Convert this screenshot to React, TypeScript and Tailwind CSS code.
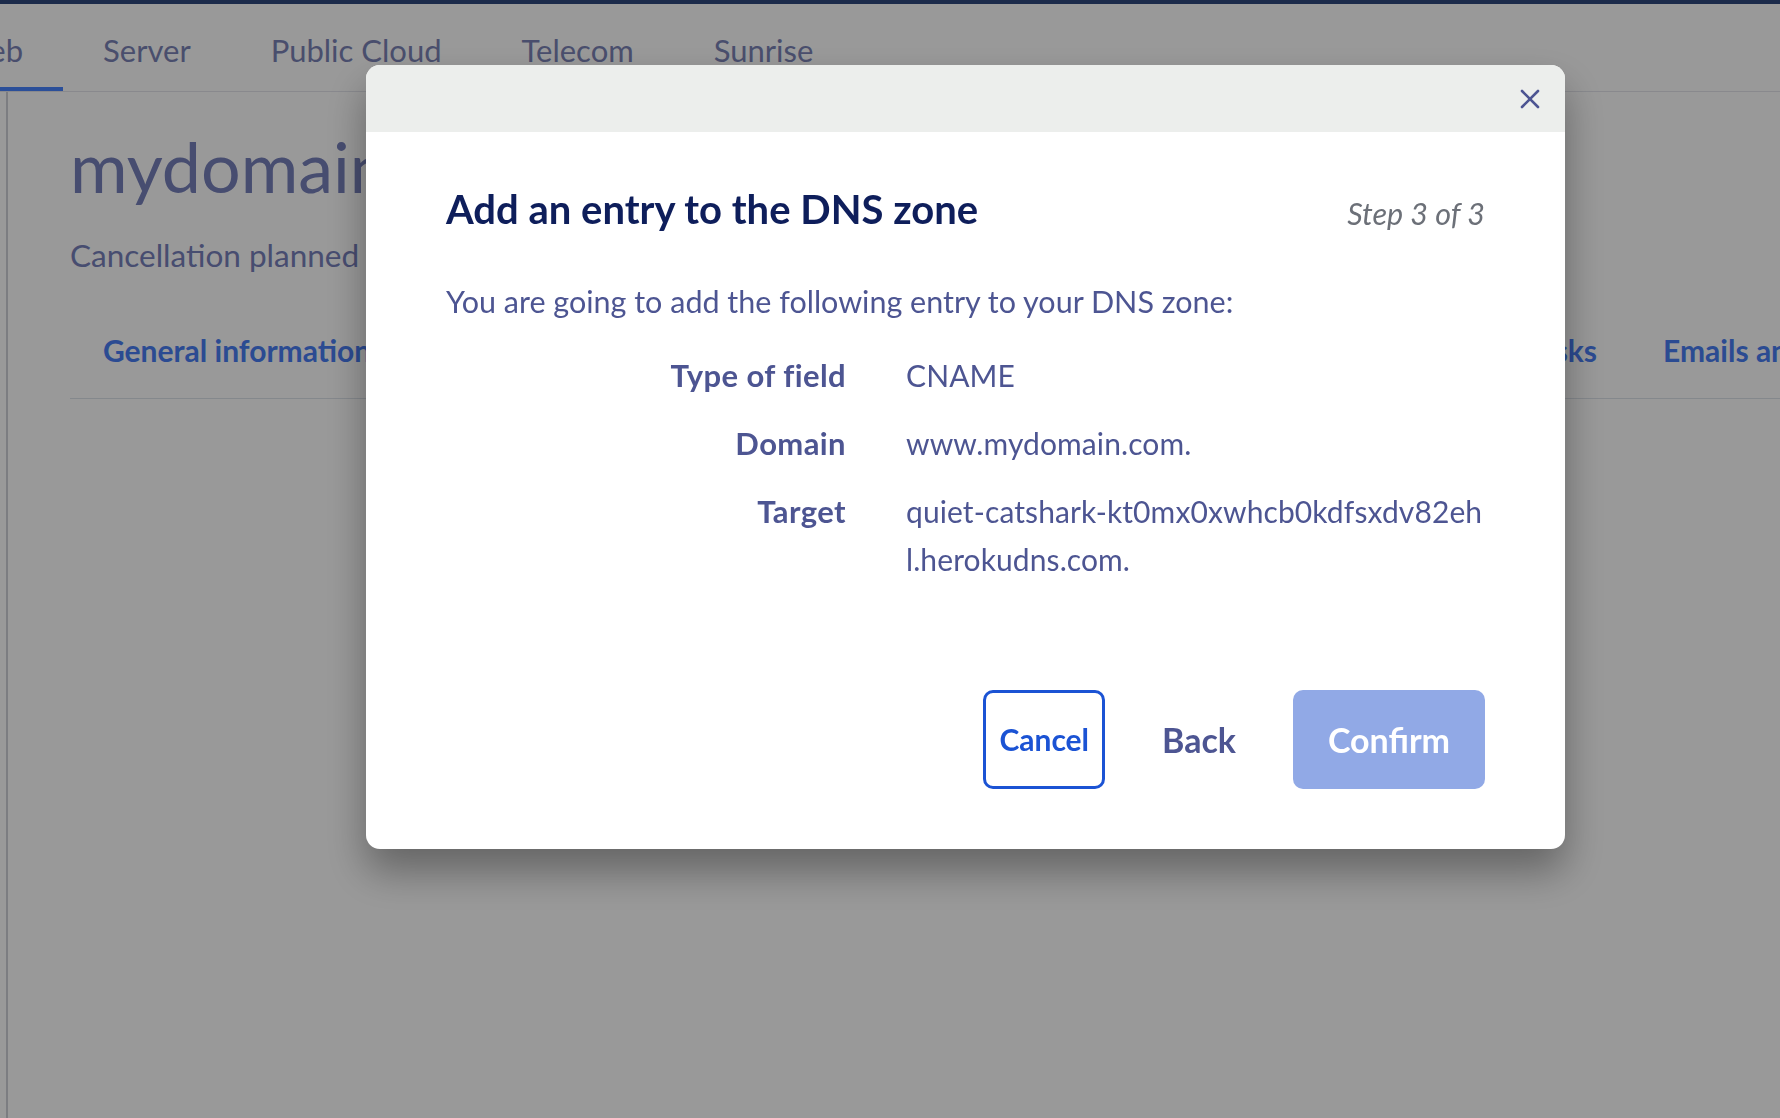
import React from 'react';

const topTabs = ['Web', 'Server', 'Public Cloud', 'Telecom', 'Sunrise'];
const subTabs = ['General information', 'DNS zone', 'DNS servers', 'Redirection', 'Dynhost', 'GLUE', 'SSL', 'Tasks', 'Emails and more'];

function CloseIcon() {
  return (
    <svg width="20" height="20" viewBox="0 0 20 20" fill="none" stroke="#4d5592" strokeWidth="2.6" strokeLinecap="round">
      <line x1="2" y1="2" x2="18" y2="18" />
      <line x1="18" y1="2" x2="2" y2="18" />
    </svg>
  );
}

export default function App() {
  const rows = [
    { label: 'Type of field', value: 'CNAME' },
    { label: 'Domain', value: 'www.mydomain.com.' },
    { label: 'Target', value: 'quiet-catshark-kt0mx0xwhcb0kdfsxdv82ehl.herokudns.com.' },
  ];

  return (
    <div className="relative h-[1118px] w-full overflow-hidden bg-white font-['Lato',sans-serif]">
      {/* Top bar */}
      <div className="h-[4px] bg-[#2f487d]" />
      <nav className="h-[88px] border-b border-[#e4e5ec] overflow-hidden">
        <div className="flex h-full ml-[-81px]">
          {topTabs.map((t, i) => (
            <div
              key={t}
              className={`flex items-center px-10 pt-[10px] text-[31px] text-[#7b83b6] whitespace-nowrap ${i === 0 ? 'border-b-4 border-[#4884ff]' : 'border-b-4 border-transparent'}`}
            >
              {t}
            </div>
          ))}
        </div>
      </nav>

      {/* Page body */}
      <div className="ml-[6px] h-full border-l-2 border-[#cfd0d8] pl-[62px] pt-[32px]">
        <h1 className="text-[70px] leading-[84px] text-[#7780bb] whitespace-nowrap">mydomain.com</h1>
        <p className="mt-[29px] text-[31.5px] leading-[36px] text-[#7780bb]">Cancellation planned</p>
        <div className="mt-[45px] flex border-b border-[#dde3ea] whitespace-nowrap">
          {subTabs.map(t => (
            <div key={t} className="px-[33px] pt-[14px] pb-[30px] text-[30px] leading-[36px] font-bold text-[#497df3]">
              {t}
            </div>
          ))}
        </div>
      </div>

      {/* Overlay + modal */}
      <div className="fixed inset-0 bg-black/40 pl-[366px] pt-[65px]">
        <div className="w-[1199px] rounded-[14px] bg-white overflow-hidden shadow-[0_22px_40px_rgba(0,0,0,0.35)]">
          <div className="h-[67px] bg-[#eceeec] flex items-center justify-end pr-[25px] pt-[1px]">
            <CloseIcon />
          </div>
          <div className="px-[80px] pt-[55px] pb-[60px]">
            <div className="flex h-[44px] items-center justify-between">
              <h2 className="text-[40px] leading-[44px] font-bold text-[#0e1e5b]">Add an entry to the DNS zone</h2>
              <span className="pt-[7px] text-[30.5px] leading-[36px] italic text-[#6c7078]">Step 3 of 3</span>
            </div>
            <p className="mt-[50px] text-[30.5px] leading-[40px] text-[#4d5592]">
              You are going to add the following entry to your DNS zone:
            </p>
            <div className="mt-[30px] grid grid-cols-[400px_1fr] gap-x-[60px] gap-y-[20px] leading-[48px] text-[#4d5592]">
              {rows.map(r => (
                <React.Fragment key={r.label}>
                  <div className="text-right text-[31px] tracking-[0.4px] font-bold">{r.label}</div>
                  <div className="break-all text-[30px] tracking-[0.1px]">{r.value}</div>
                </React.Fragment>
              ))}
            </div>
            <div className="mt-[107px] flex justify-end items-center gap-[24px]">
              <button className="h-[99px] px-[13px] rounded-[10px] border-[3px] border-[#1b53d4] text-[30px] font-bold text-[#1b53d4]">
                Cancel
              </button>
              <button className="h-[99px] px-[33px] text-[34px] font-bold text-[#4d5592]">Back</button>
              <button className="h-[99px] w-[192px] rounded-[10px] bg-[#91a9e6] text-[34px] font-bold text-white">
                Confirm
              </button>
            </div>
          </div>
        </div>
      </div>
    </div>
  );
}
